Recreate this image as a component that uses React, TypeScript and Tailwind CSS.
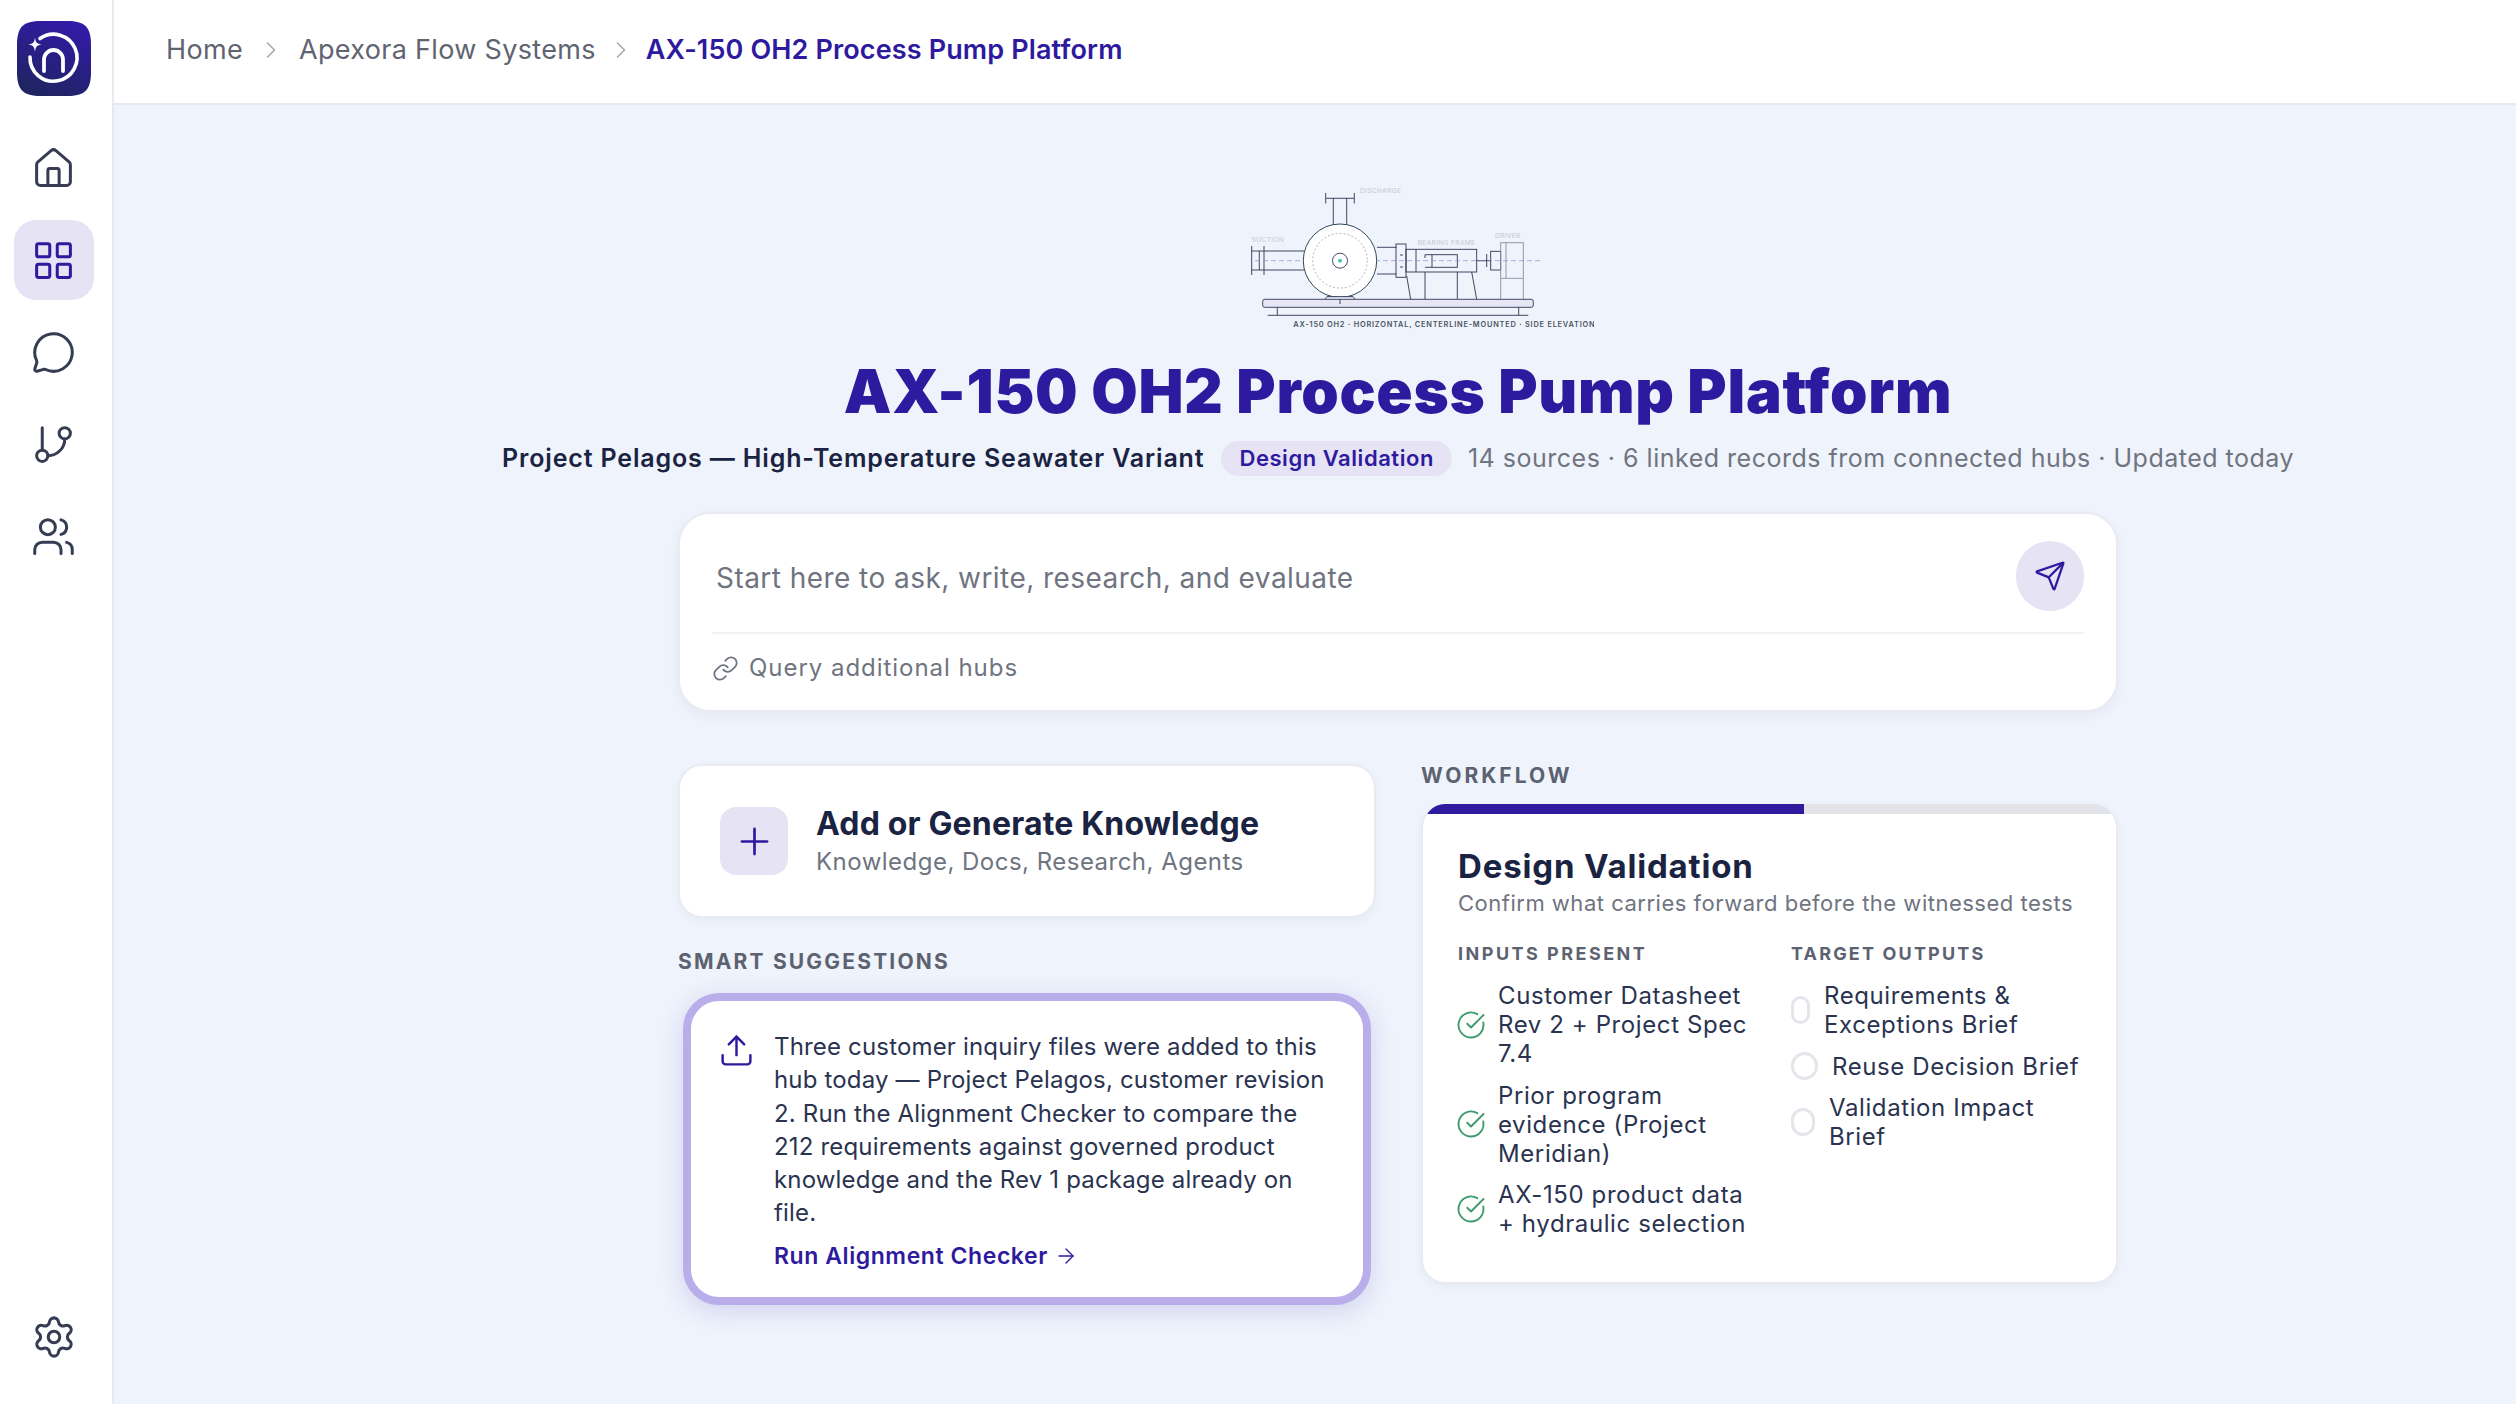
import React from "react";
import { House, LayoutGrid, MessageCircle, GitBranch, Users, Settings, ChevronRight, Send, Link, Plus, Upload, ArrowRight, CircleCheckBig } from "lucide-react";

const Logo = () => (
  <svg width="74" height="75" viewBox="0 0 74 75" aria-label="logo">
    <defs>
      <linearGradient id="lg" x1="0.7" y1="0" x2="0.3" y2="1">
        <stop offset="0" stopColor="#331aa8" />
        <stop offset="1" stopColor="#1e2460" />
      </linearGradient>
    </defs>
    <path d="M24 0H50C68 0 74 6 74 24V51C74 69 68 75 50 75H24C6 75 0 69 0 51V24C0 6 6 0 24 0Z" fill="url(#lg)" />
    <path d="M23 17.500A23.500 23.500 0 1 1 13 36" fill="none" stroke="#fff" strokeWidth="3.600" strokeLinecap="round" />
    <path d="M27 50V38.500A9.500 9.500 0 0 1 46 38.500V50" fill="none" stroke="#fff" strokeWidth="3.800" strokeLinecap="round" />
    <path d="M18 16.500C18.700 21.500 19.500 22.600 25 23.500C19.500 24.400 18.700 25.500 18 31C17.300 25.500 16.500 24.400 11 23.500C16.500 22.600 17.300 21.500 18 16.500Z" fill="#fff" />
  </svg>
);

const Pump = () => {
  const d = "#2d3552";
  return (
    <svg width="392" height="165" viewBox="-18 0 392 165" fontFamily="Inter, sans-serif">
      <text x="140" y="22.700" fontSize="6.600" letterSpacing="0.35" fill="#c3c7d4">DISCHARGE</text>
      <text x="31.700" y="71.700" fontSize="6.600" letterSpacing="0.35" fill="#c3c7d4">SUCTION</text>
      <text x="197.700" y="75" fontSize="6.600" letterSpacing="0.35" fill="#c3c7d4">BEARING FRAME</text>
      <text x="275" y="68" fontSize="6.600" letterSpacing="0.35" fill="#c3c7d4">DRIVER</text>
      <g fill="none" stroke={d} strokeWidth="0.9">
        <path d="M105.700 28.300H134.300M105.700 23V33.500M134.300 23V33.500M113.300 28.300V55M126.700 28.300V55" />
        <path d="M31.700 76V105M44 76V105M39.300 81V100M31.700 81H84M31.700 100H84" />
        <path d="M157 77.300H176.500M157 104H176.500" />
        <rect x="176" y="74" width="10" height="33.300" />
        <path d="M180 85H183M180 97H183" />
        <rect x="186" y="79.300" width="70.700" height="22.700" />
        <path d="M196 79.300V102" />
        <rect x="212" y="84.700" width="25.300" height="12.600" />
        <path d="M205 84.700H212M205 97.300H212M205 84.700V88M257 90.700H271M266.700 84V97" />
        <rect x="270.700" y="81.300" width="10" height="18.700" />
        <path d="M205 102V129.300M237.300 102V129.300M186.700 106L190.700 129.300M251.700 102L256.700 129.300" />
      </g>
      <g fill="none" stroke="#8a90a0" strokeWidth="0.9">
        <rect x="280.700" y="72.700" width="22.600" height="35.600" />
        <path d="M286 72.700V108.300M280.700 108.300V129.300M303.300 108.300V129.300" />
      </g>
      <path d="M35 90.700H320" stroke="#8f88cc" strokeWidth="0.9" strokeDasharray="5 3" opacity="0.75" />
      <circle cx="120" cy="90.700" r="36.700" fill="#fff" stroke="#2f4858" strokeWidth="1" />
      <circle cx="120" cy="90.700" r="27.300" fill="none" stroke="#8a8f9c" strokeWidth="0.7" strokeDasharray="2 2" />
      <circle cx="120" cy="90.700" r="7.500" fill="#fff" stroke={d} strokeWidth="0.9" />
      <circle cx="120" cy="90.700" r="2" fill="#4fc3b5" />
      <rect x="42.700" y="129.300" width="270.600" height="8" rx="2" fill="#e6e6f5" stroke={d} strokeWidth="0.9" />
      <path d="M47.700 145.300H308.300M57.300 137.300V145.300M298.700 137.300V145.300M120 129V134" fill="none" stroke={d} strokeWidth="0.9" />
      <path d="M105 129L107 126.500H133L135 129" fill="#cfd0e4" stroke={d} strokeWidth="0.8" />
      <text x="73.300" y="157" fontSize="7.400" fontWeight="600" letterSpacing="0.78" fill="#4b5563">AX-150 OH2 · HORIZONTAL, CENTERLINE-MOUNTED · SIDE ELEVATION</text>
    </svg>
  );
};

const checks: React.ReactNode[] = [
  <>Customer Datasheet<br />Rev 2 + Project Spec<br />7.4</>,
  <>Prior program<br />evidence (Project<br />Meridian)</>,
  <>AX-150 product data<br />+ hydraulic selection</>,
];

export default function App() {
  return (
    <div className="flex min-h-[1404px] w-[2516px] bg-[#eff3fb] font-['Inter',sans-serif] text-[#1a2341]">
      <aside className="flex w-[114px] shrink-0 flex-col items-center border-r-2 border-[#e6e9f0] bg-white pb-[27px] pr-[5px] pt-[21px]">
        <Logo />
        <nav className="mt-[32px] flex flex-col gap-[12px]">
          <button className="flex h-[80px] w-[80px] items-center justify-center text-[#363c52]"><House size={45} strokeWidth={1.6} /></button>
          <button className="flex h-[80px] w-[80px] items-center justify-center rounded-[22px] bg-[#e6e3f5] text-[#2e1a9e]"><LayoutGrid size={45} strokeWidth={1.6} /></button>
          <button className="flex h-[80px] w-[80px] items-center justify-center text-[#363c52]"><MessageCircle size={45} strokeWidth={1.6} /></button>
          <button className="flex h-[80px] w-[80px] items-center justify-center text-[#363c52]"><GitBranch size={45} strokeWidth={1.6} /></button>
          <button className="flex h-[80px] w-[80px] items-center justify-center text-[#363c52]"><Users size={45} strokeWidth={1.6} /></button>
        </nav>
        <button className="mt-auto flex h-[80px] w-[80px] items-center justify-center text-[#363c52]"><Settings size={46} strokeWidth={1.6} /></button>
      </aside>

      <div className="flex min-w-0 flex-1 flex-col">
        <header className="flex h-[105px] items-center border-b-2 border-[#e6e9f0] bg-white pb-[3px] pl-[52px] text-[27px] tracking-[0.012em] text-[#5f6470]">
          <span>Home</span>
          <ChevronRight size={28} strokeWidth={1.3} className="mx-[14px] text-[#a4a8b2]" />
          <span>Apexora Flow Systems</span>
          <ChevronRight size={28} strokeWidth={1.3} className="mx-[11px] text-[#a4a8b2]" />
          <span className="font-semibold tracking-[0.005em] text-[#2e1a9e]">AX-150 OH2 Process Pump Platform</span>
        </header>

        <main className="ml-[564px] flex w-[1440px] flex-col items-center pt-[65px]">
          <Pump />
          <h1 className="mt-[20px] whitespace-nowrap text-[60px] font-black leading-[72px] tracking-[0.012em] text-[#2e1a9e]">AX-150 OH2 Process Pump Platform</h1>
          <div className="mt-[14px] flex h-[35px] items-center whitespace-nowrap text-[25px]">
            <span className="font-semibold tracking-[0.034em] text-[#1a2341]">Project Pelagos — High-Temperature Seawater Variant</span>
            <span className="ml-[17px] flex h-[35px] items-center rounded-full bg-[#e6e3f5] px-[18px] text-[22px] font-semibold tracking-[0.025em] text-[#2e1a9e]">Design Validation</span>
            <span className="ml-[16px] tracking-[0.02em] text-[#6f7480]">14 sources · 6 linked records from connected hubs · Updated today</span>
          </div>

          <section className="mt-[36px] flex h-[200px] w-[1440px] flex-col rounded-[32px] border-2 border-[#e8ebf2] bg-white px-[32px] pt-[27px] shadow-[0_4px_12px_rgba(30,35,90,0.05)]">
            <div className="flex h-[70px] items-center justify-between pl-[4px]">
              <span className="pt-[3px] text-[28px] tracking-[0.016em] text-[#6f7480]">Start here to ask, write, research, and evaluate</span>
              <span className="flex h-[70px] w-[68px] items-center justify-center rounded-full bg-[#e6e3f5] text-[#2e1a9e]"><Send size={32} strokeWidth={1.7} /></span>
            </div>
            <div className="mt-[21px] border-t-2 border-[#f1f2f6]" />
            <div className="mt-[16px] flex items-center gap-[10px] text-[24px] tracking-[0.04em] text-[#6f7480]">
              <Link size={27} strokeWidth={1.6} />
              <span>Query additional hubs</span>
            </div>
          </section>

          <div className="mt-[52px] grid w-[1440px] grid-cols-[698px_697px] gap-x-[45px]">
            <div className="flex flex-col">
              <section className="flex h-[154px] items-center gap-[28px] rounded-[24px] border-2 border-[#e8ebf2] bg-white pl-[40px] shadow-[0_3px_8px_rgba(30,35,90,0.04)]">
                <span className="flex h-[68px] w-[68px] items-center justify-center rounded-[16px] bg-[#e6e3f5] text-[#2e1a9e]"><Plus size={43} strokeWidth={1.5} /></span>
                <div className="flex flex-col pt-[1px]">
                  <span className="text-[32px] font-bold leading-[40px] tracking-[0.005em] text-[#1a2341]">Add or Generate Knowledge</span>
                  <span className="pt-[1px] text-[24px] leading-[34px] tracking-[0.02em] text-[#6f7480]">Knowledge, Docs, Research, Agents</span>
                </div>
              </section>
              <h2 className="mt-[32px] h-[24px] text-[21px] font-bold leading-[24px] tracking-[0.104em] text-[#5c6270]">SMART SUGGESTIONS</h2>
              <section className="mx-[5px] mt-[19px] flex h-[312px] gap-[19px] rounded-[36px] border-[8px] border-[#b9aeea] bg-white pl-[27px] pt-[29px] shadow-[0_6px_24px_rgba(80,60,190,0.18)]">
                <Upload size={37} strokeWidth={1.6} className="mt-[2px] shrink-0 text-[#2e1a9e]" />
                <div className="flex flex-col">
                  <p className="whitespace-nowrap text-[24px] leading-[33.3px] tracking-[0.007em] text-[#2a3350]">Three customer inquiry files were added to this<br />hub today — Project Pelagos, customer revision<br />2. Run the Alignment Checker to compare the<br />212 requirements against governed product<br />knowledge and the Rev 1 package already on<br />file.</p>
                  <span className="mt-[10px] flex items-center gap-[6px] text-[23px] font-semibold leading-[32px] tracking-[0.025em] text-[#2e1a9e]">Run Alignment Checker <ArrowRight size={24} strokeWidth={1.4} /></span>
                </div>
              </section>
            </div>

            <div className="flex flex-col">
              <h2 className="h-[24px] text-[21px] font-bold leading-[24px] tracking-[0.143em] text-[#5c6270]">WORKFLOW</h2>
              <section className="mt-[16px] h-[480px] overflow-hidden rounded-[24px] border-2 border-t-0 border-[#e8ebf2] bg-white shadow-[0_3px_8px_rgba(30,35,90,0.04)]">
                <div className="h-[10px] w-full bg-[#e2e4ea]"><div className="h-full w-[55%] bg-[#2e1a9e]" /></div>
                <div className="px-[35px] pt-[33px]">
                  <h3 className="text-[33px] font-bold leading-[38px] tracking-[0.025em] text-[#1a2341]">Design Validation</h3>
                  <p className="mt-[2px] whitespace-nowrap text-[22px] leading-[32px] tracking-[0.023em] text-[#6f7480]">Confirm what carries forward before the witnessed tests</p>
                  <div className="mt-[22px] grid grid-cols-[298px_300px] gap-x-[35px]">
                    <div>
                      <h4 className="text-[18px] font-bold leading-[26px] tracking-[0.138em] text-[#5c6270]">INPUTS PRESENT</h4>
                      <ul className="mt-[14px] flex flex-col gap-[12.500px] text-[24px] leading-[29px] tracking-[0.025em] text-[#2a3350]">
                        {checks.map((c, i) => (
                          <li key={i} className="flex items-center gap-[12px]">
                            <CircleCheckBig size={30} strokeWidth={1.5} className="-ml-[2px] shrink-0 text-[#3e9a6e]" />
                            <span className="whitespace-nowrap">{c}</span>
                          </li>
                        ))}
                      </ul>
                    </div>
                    <div>
                      <h4 className="text-[18px] font-bold leading-[26px] tracking-[0.12em] text-[#5c6270]">TARGET OUTPUTS</h4>
                      <ul className="mt-[14px] flex flex-col gap-[12.500px] text-[24px] leading-[29px] tracking-[0.025em] text-[#2a3350]">
                        <li className="flex items-center gap-[14px]">
                          <span className="h-[28px] w-[19px] rounded-full border-[3px] border-[#e4e6ec]" />
                          <span className="whitespace-nowrap">Requirements &amp;<br />Exceptions Brief</span>
                        </li>
                        <li className="flex items-center gap-[14px]">
                          <span className="h-[28px] w-[27px] rounded-full border-[3px] border-[#e4e6ec]" />
                          <span className="whitespace-nowrap">Reuse Decision Brief</span>
                        </li>
                        <li className="flex items-center gap-[14px]">
                          <span className="h-[28px] w-[24px] rounded-full border-[3px] border-[#e4e6ec]" />
                          <span className="whitespace-nowrap">Validation Impact<br />Brief</span>
                        </li>
                      </ul>
                    </div>
                  </div>
                </div>
              </section>
            </div>
          </div>
        </main>
      </div>
    </div>
  );
}
